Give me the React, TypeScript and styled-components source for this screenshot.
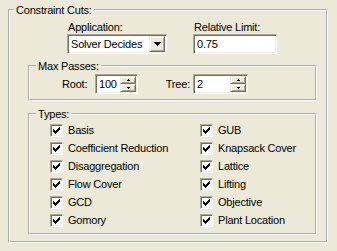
import React from 'react';
import styled, { createGlobalStyle, css } from 'styled-components';

const GlobalStyle = createGlobalStyle`
  html, body {
    margin: 0;
    padding: 0;
    background: #ece9d8;
  }
  body {
    font-family: "Liberation Sans", Arial, sans-serif;
    font-size: 11px;
    color: #000;
  }
`;

const sunken = css`
  box-sizing: border-box;
  border: 1px solid;
  border-color: #aca899 #fff #fff #aca899;
  box-shadow: inset 1px 1px 0 #716f64, inset -1px -1px 0 #f1efe2;
  background: #fff;
  padding: 1px;
`;

const raised = css`
  box-sizing: border-box;
  border: 1px solid;
  border-color: #f1efe2 #716f64 #716f64 #f1efe2;
  box-shadow: inset 1px 1px 0 #fff, inset -1px -1px 0 #aca899;
  background: #ece9d8;
  display: flex;
  align-items: center;
  justify-content: center;
`;

const Window = styled.div`
  width: 337px;
  height: 251px;
  box-sizing: border-box;
  padding: 3px 9px 0 8px;
  background: #ece9d8;
  letter-spacing: -0.2px;
`;

const Group = styled.fieldset<{ $pad: string; $margin?: string }>`
  margin: ${p => p.$margin || '0'};
  padding: ${p => p.$pad};
  border: 2px groove #fff;
  min-width: 0;
`;

const Legend = styled.legend<{ $indent: number }>`
  margin-left: ${p => p.$indent}px;
  padding: 0 2px;
  line-height: 14px;
`;

const TopRow = styled.div`
  display: flex;
  gap: 26px;
  padding: 4px 0 0 57px;
`;

const Column = styled.div`
  display: flex;
  flex-direction: column;
`;

const Label = styled.span`
  line-height: 13px;
  padding-left: 1px;
`;

const Combo = styled.div`
  ${sunken}
  width: 100px;
  height: 20px;
  display: flex;
`;

const FieldText = styled.span`
  flex: 1;
  line-height: 16px;
  padding-left: 2px;
  white-space: nowrap;
`;

const ComboButton = styled.div`
  ${raised}
  width: 16px;
  height: 16px;
`;

const TextBox = styled.div`
  ${sunken}
  width: 84px;
  height: 20px;
  display: flex;
`;

const PassRow = styled.div`
  display: grid;
  grid-template-columns: 33px 43px 55px 55px;
  align-items: center;
  padding-left: 32px;
`;

const PassLabel = styled.span<{ $right?: boolean }>`
  text-align: ${p => (p.$right ? 'right' : 'left')};
  padding-right: ${p => (p.$right ? '3px' : '0')};
  line-height: 13px;
`;

const Spin = styled.div`
  ${sunken}
  height: 20px;
  display: flex;
`;

const SpinButtons = styled.div`
  display: flex;
  flex-direction: column;
  width: 16px;
`;

const SpinButton = styled.div`
  ${raised}
  height: 8px;
`;

const TypeGrid = styled.div`
  display: grid;
  grid-template-columns: 150px auto;
  grid-template-rows: repeat(6, 18px);
  grid-auto-flow: column;
  padding-left: 20px;
`;

const CheckItem = styled.label`
  display: flex;
  align-items: center;
  gap: 5px;
  line-height: 18px;
  white-space: nowrap;
`;

const Box = styled.span`
  ${sunken}
  width: 13px;
  height: 13px;
  display: flex;
  align-items: center;
  justify-content: center;
  flex-shrink: 0;
`;

// classic 7x7 check glyph, drawn as pixel runs
const checkRuns: [number, number, number][] = [
  [6, 0, 1],
  [5, 1, 2],
  [0, 2, 1], [4, 2, 3],
  [0, 3, 2], [3, 3, 3],
  [0, 4, 5],
  [1, 5, 3],
  [2, 6, 1],
];

const Check = () => (
  <svg width="7" height="7" viewBox="0 0 7 7" shapeRendering="crispEdges">
    {checkRuns.map(([x, y, w], i) => (
      <rect key={i} x={x} y={y} width={w} height={1} fill="#000" />
    ))}
  </svg>
);

const Arrow = ({ size, up }: { size: number; up?: boolean }) => {
  const rows = Array.from({ length: size }, (_, i) => i);
  const w = size * 2 - 1;
  return (
    <svg width={w} height={size} viewBox={`0 0 ${w} ${size}`} shapeRendering="crispEdges">
      {rows.map(i => {
        const row = up ? size - 1 - i : i;
        return <rect key={i} x={i} y={row} width={w - i * 2} height={1} fill="#000" />;
      })}
    </svg>
  );
};

const Spinner = ({ value }: { value: string }) => (
  <Spin>
    <FieldText>{value}</FieldText>
    <SpinButtons>
      <SpinButton><Arrow size={2} up /></SpinButton>
      <SpinButton><Arrow size={2} /></SpinButton>
    </SpinButtons>
  </Spin>
);

const leftTypes = ['Basis', 'Coefficient Reduction', 'Disaggregation', 'Flow Cover', 'GCD', 'Gomory'];
const rightTypes = ['GUB', 'Knapsack Cover', 'Lattice', 'Lifting', 'Objective', 'Plant Location'];

export default function App() {
  return (
    <Window>
      <GlobalStyle />
      <Group $pad="0 0 6px 0">
        <Legend $indent={4}>Constraint Cuts:</Legend>
        <TopRow>
          <Column>
            <Label>Application:</Label>
            <Combo>
              <FieldText>Solver Decides</FieldText>
              <ComboButton><Arrow size={4} /></ComboButton>
            </Combo>
          </Column>
          <Column>
            <Label>Relative Limit:</Label>
            <TextBox>
              <FieldText>0.75</FieldText>
            </TextBox>
          </Column>
        </TopRow>

        <Group $pad="1px 0 5px 0" $margin="5px 9px 0 18px">
          <Legend $indent={6}>Max Passes:</Legend>
          <PassRow>
            <PassLabel>Root:</PassLabel>
            <Spinner value="100" />
            <PassLabel $right>Tree:</PassLabel>
            <Spinner value="2" />
          </PassRow>
        </Group>

        <Group $pad="0 0 4px 0" $margin="6px 9px 0 18px">
          <Legend $indent={6}>Types:</Legend>
          <TypeGrid>
            {[...leftTypes, ...rightTypes].map(t => (
              <CheckItem key={t}>
                <Box><Check /></Box>
                {t}
              </CheckItem>
            ))}
          </TypeGrid>
        </Group>
      </Group>
    </Window>
  );
}
